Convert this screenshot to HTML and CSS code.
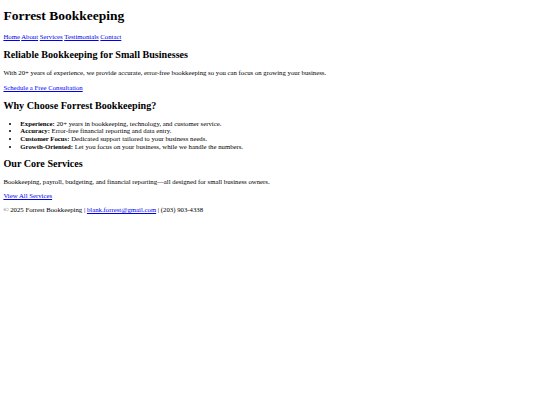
FILE: index.html
```html
<!DOCTYPE html>
<html lang="en">
<head>
<meta charset="utf-8">
<title>Forrest Bookkeeping</title>
<link rel="stylesheet" href="styles.css">
</head>
<body>
<header class="site-header">
  <h1 class="site-title">Forrest Bookkeeping</h1>
  <nav class="site-nav">
    <a href="#">Home</a>
    <a href="#">About</a>
    <a href="#">Services</a>
    <a href="#">Testimonials</a>
    <a href="#">Contact</a>
  </nav>
</header>
<main>
  <section class="block">
    <h2 class="block-title">Reliable Bookkeeping for Small Businesses</h2>
    <p class="text">With 20+ years of experience, we provide accurate, error-free bookkeeping so you can focus on growing your business.</p>
    <p class="text"><a href="#">Schedule a Free Consultation</a></p>
  </section>
  <section class="block">
    <h2 class="block-title">Why Choose Forrest Bookkeeping?</h2>
    <ul class="reasons">
      <li><strong>Experience:</strong> 20+ years in bookkeeping, technology, and customer service.</li>
      <li><strong>Accuracy:</strong> Error-free financial reporting and data entry.</li>
      <li><strong>Customer Focus:</strong> Dedicated support tailored to your business needs.</li>
      <li><strong>Growth-Oriented:</strong> Let you focus on your business, while we handle the numbers.</li>
    </ul>
  </section>
  <section class="block">
    <h2 class="block-title">Our Core Services</h2>
    <p class="text">Bookkeeping, payroll, budgeting, and financial reporting—all designed for small business owners.</p>
    <p class="text"><a href="#">View All Services</a></p>
  </section>
</main>
<footer class="site-footer">
  <p class="text">© 2025 Forrest Bookkeeping | <a href="#">blank.forrest@gmail.com</a> | (203) 903-4338</p>
</footer>
</body>
</html>
```

FILE: styles.css
```css
html {
  background: #fff;
}
body {
  margin: 3.4px;
  font-family: "Liberation Serif", "Times New Roman", serif;
  font-size: 6.75px;
  line-height: 7.6px;
  color: #000;
}
a {
  color: #0000ee;
}
.site-title {
  font-size: 13.5px;
  line-height: 15.5px;
  margin: 4.6px 0 10px;
}
.block-title {
  font-size: 10.125px;
  line-height: 11.6px;
  margin: 8.4px 0;
}
.text {
  margin: 6.75px 0;
}
.reasons {
  margin: 6.75px 0;
  padding-left: 16.9px;
}
.block:last-child .block-title {
  margin-top: 7.4px;
}
.site-footer .text {
  margin-top: 6.25px;
}
```
